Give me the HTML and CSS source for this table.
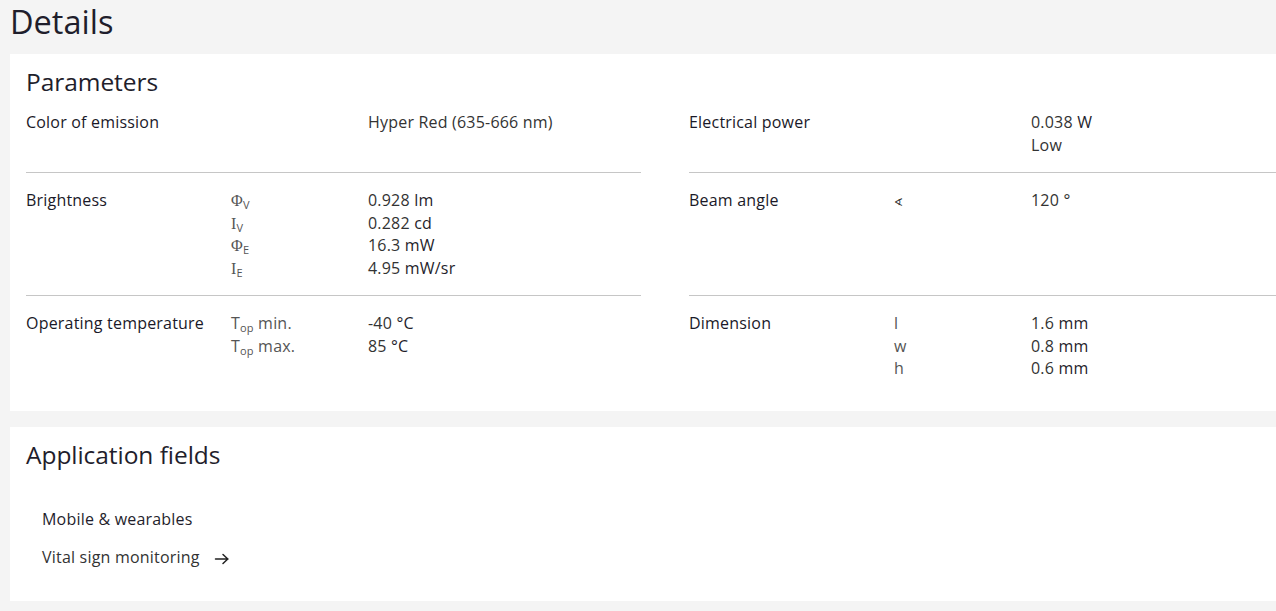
FILE: index.html
```html
<!DOCTYPE html>
<html lang="en">
<head>
<meta charset="utf-8">
<title>Details</title>
<link rel="stylesheet" href="styles.css">
</head>
<body>
<main class="page">
  <h1 class="page-title">Details</h1>

  <section class="card">
    <h2 class="card-title">Parameters</h2>
    <div class="params">
      <div class="cell">
        <div class="label">Color of emission</div>
        <div class="sym"></div>
        <div class="val"><div>Hyper Red (635-666 nm)</div></div>
      </div>
      <div class="cell">
        <div class="label">Electrical power</div>
        <div class="sym"></div>
        <div class="val"><div>0.038 <span class="u">W</span></div><div>Low</div></div>
      </div>

      <div class="cell">
        <div class="label">Brightness</div>
        <div class="sym">
          <div><span class="s">Φ</span><sub>V</sub></div>
          <div><span class="s">I</span><sub>V</sub></div>
          <div><span class="s">Φ</span><sub>E</sub></div>
          <div><span class="s">I</span><sub>E</sub></div>
        </div>
        <div class="val">
          <div>0.928 <span class="u">lm</span></div>
          <div>0.282 <span class="u">cd</span></div>
          <div>16.3 <span class="u">mW</span></div>
          <div>4.95 <span class="u">mW/sr</span></div>
        </div>
      </div>
      <div class="cell">
        <div class="label">Beam angle</div>
        <div class="sym"><div><span class="angle">∢</span></div></div>
        <div class="val"><div>120 °</div></div>
      </div>

      <div class="cell last">
        <div class="label">Operating temperature</div>
        <div class="sym">
          <div>T<sub>op</sub> min.</div>
          <div>T<sub>op</sub> max.</div>
        </div>
        <div class="val">
          <div>-40 <span class="u">°C</span></div>
          <div>85 <span class="u">°C</span></div>
        </div>
      </div>
      <div class="cell last">
        <div class="label">Dimension</div>
        <div class="sym">
          <div>l</div>
          <div>w</div>
          <div>h</div>
        </div>
        <div class="val">
          <div>1.6 <span class="u">mm</span></div>
          <div>0.8 <span class="u">mm</span></div>
          <div>0.6 <span class="u">mm</span></div>
        </div>
      </div>
    </div>
  </section>

  <section class="card apps">
    <h2 class="card-title">Application fields</h2>
    <div class="app-group">
      <h3 class="app-head">Mobile &amp; wearables</h3>
      <a class="app-link" href="#">Vital sign monitoring
        <svg class="arrow" width="16" height="16" viewBox="0 0 16 16" aria-hidden="true"><path d="M1.5 8h12.5M9 3.5 13.8 8 9 12.5" fill="none" stroke="#222" stroke-width="1.5" stroke-linecap="round" stroke-linejoin="round"/></svg>
      </a>
    </div>
  </section>
</main>
</body>
</html>
```

FILE: styles.css
```css
html, body {
  margin: 0;
  padding: 0;
  background: #f4f4f4;
  overflow: hidden;
}
body {
  font-family: "Open Sans", "Noto Sans", sans-serif;
  color: #1f1e2c;
}
.page {
  width: 1310px;
  padding: 2px 0 0 10px;
}
.page-title {
  margin: 0 0 12px;
  font-size: 32.5px;
  line-height: 40px;
  font-weight: 400;
}
.card {
  background: #fff;
  padding: 12px 16px 15px;
  margin-bottom: 16px;
}
.card-title {
  margin: 0;
  font-size: 24.5px;
  line-height: 32px;
  font-weight: 400;
  letter-spacing: -0.05px;
}
.params {
  display: grid;
  grid-template-columns: 615px 615px;
  column-gap: 48px;
}
.cell {
  display: grid;
  grid-template-columns: 205px 137px 1fr;
  padding: 16px 0;
  border-bottom: 1px solid #c6c6c6;
  font-size: 16px;
  line-height: 22.5px;
  letter-spacing: 0.2px;
}
.params .cell:nth-child(-n+2) {
  padding-top: 13px;
}
.cell.last {
  border-bottom: none;
}
.label {
  color: #1a1928;
  font-weight: 500;
}
.sym {
  color: #555;
}
.sym > div,
.val > div {
  height: 22.5px;
  white-space: nowrap;
}
.s {
  font-family: "Liberation Serif", serif;
  font-size: 16px;
  line-height: 1;
}
.angle {
  font-family: "DejaVu Sans", sans-serif;
  font-size: 11px;
  line-height: 1;
  color: #333;
}
sub {
  font-size: 11px;
  vertical-align: -3px;
  line-height: 0;
}
.val {
  color: #333;
}
.u {
  color: #1f1e2c;
  font-weight: 500;
}
.apps {
  padding-bottom: 32px;
}
.app-group {
  padding: 37px 16px 0;
}
.app-head {
  margin: 0 0 16px;
  font-size: 16px;
  line-height: 22.5px;
  font-weight: 500;
  letter-spacing: 0.2px;
}
.app-link {
  display: inline-flex;
  align-items: center;
  gap: 14px;
  font-size: 16px;
  line-height: 22.5px;
  letter-spacing: 0.2px;
  color: #333;
  text-decoration: none;
}
.arrow {
  margin-top: 3px;
}
```
